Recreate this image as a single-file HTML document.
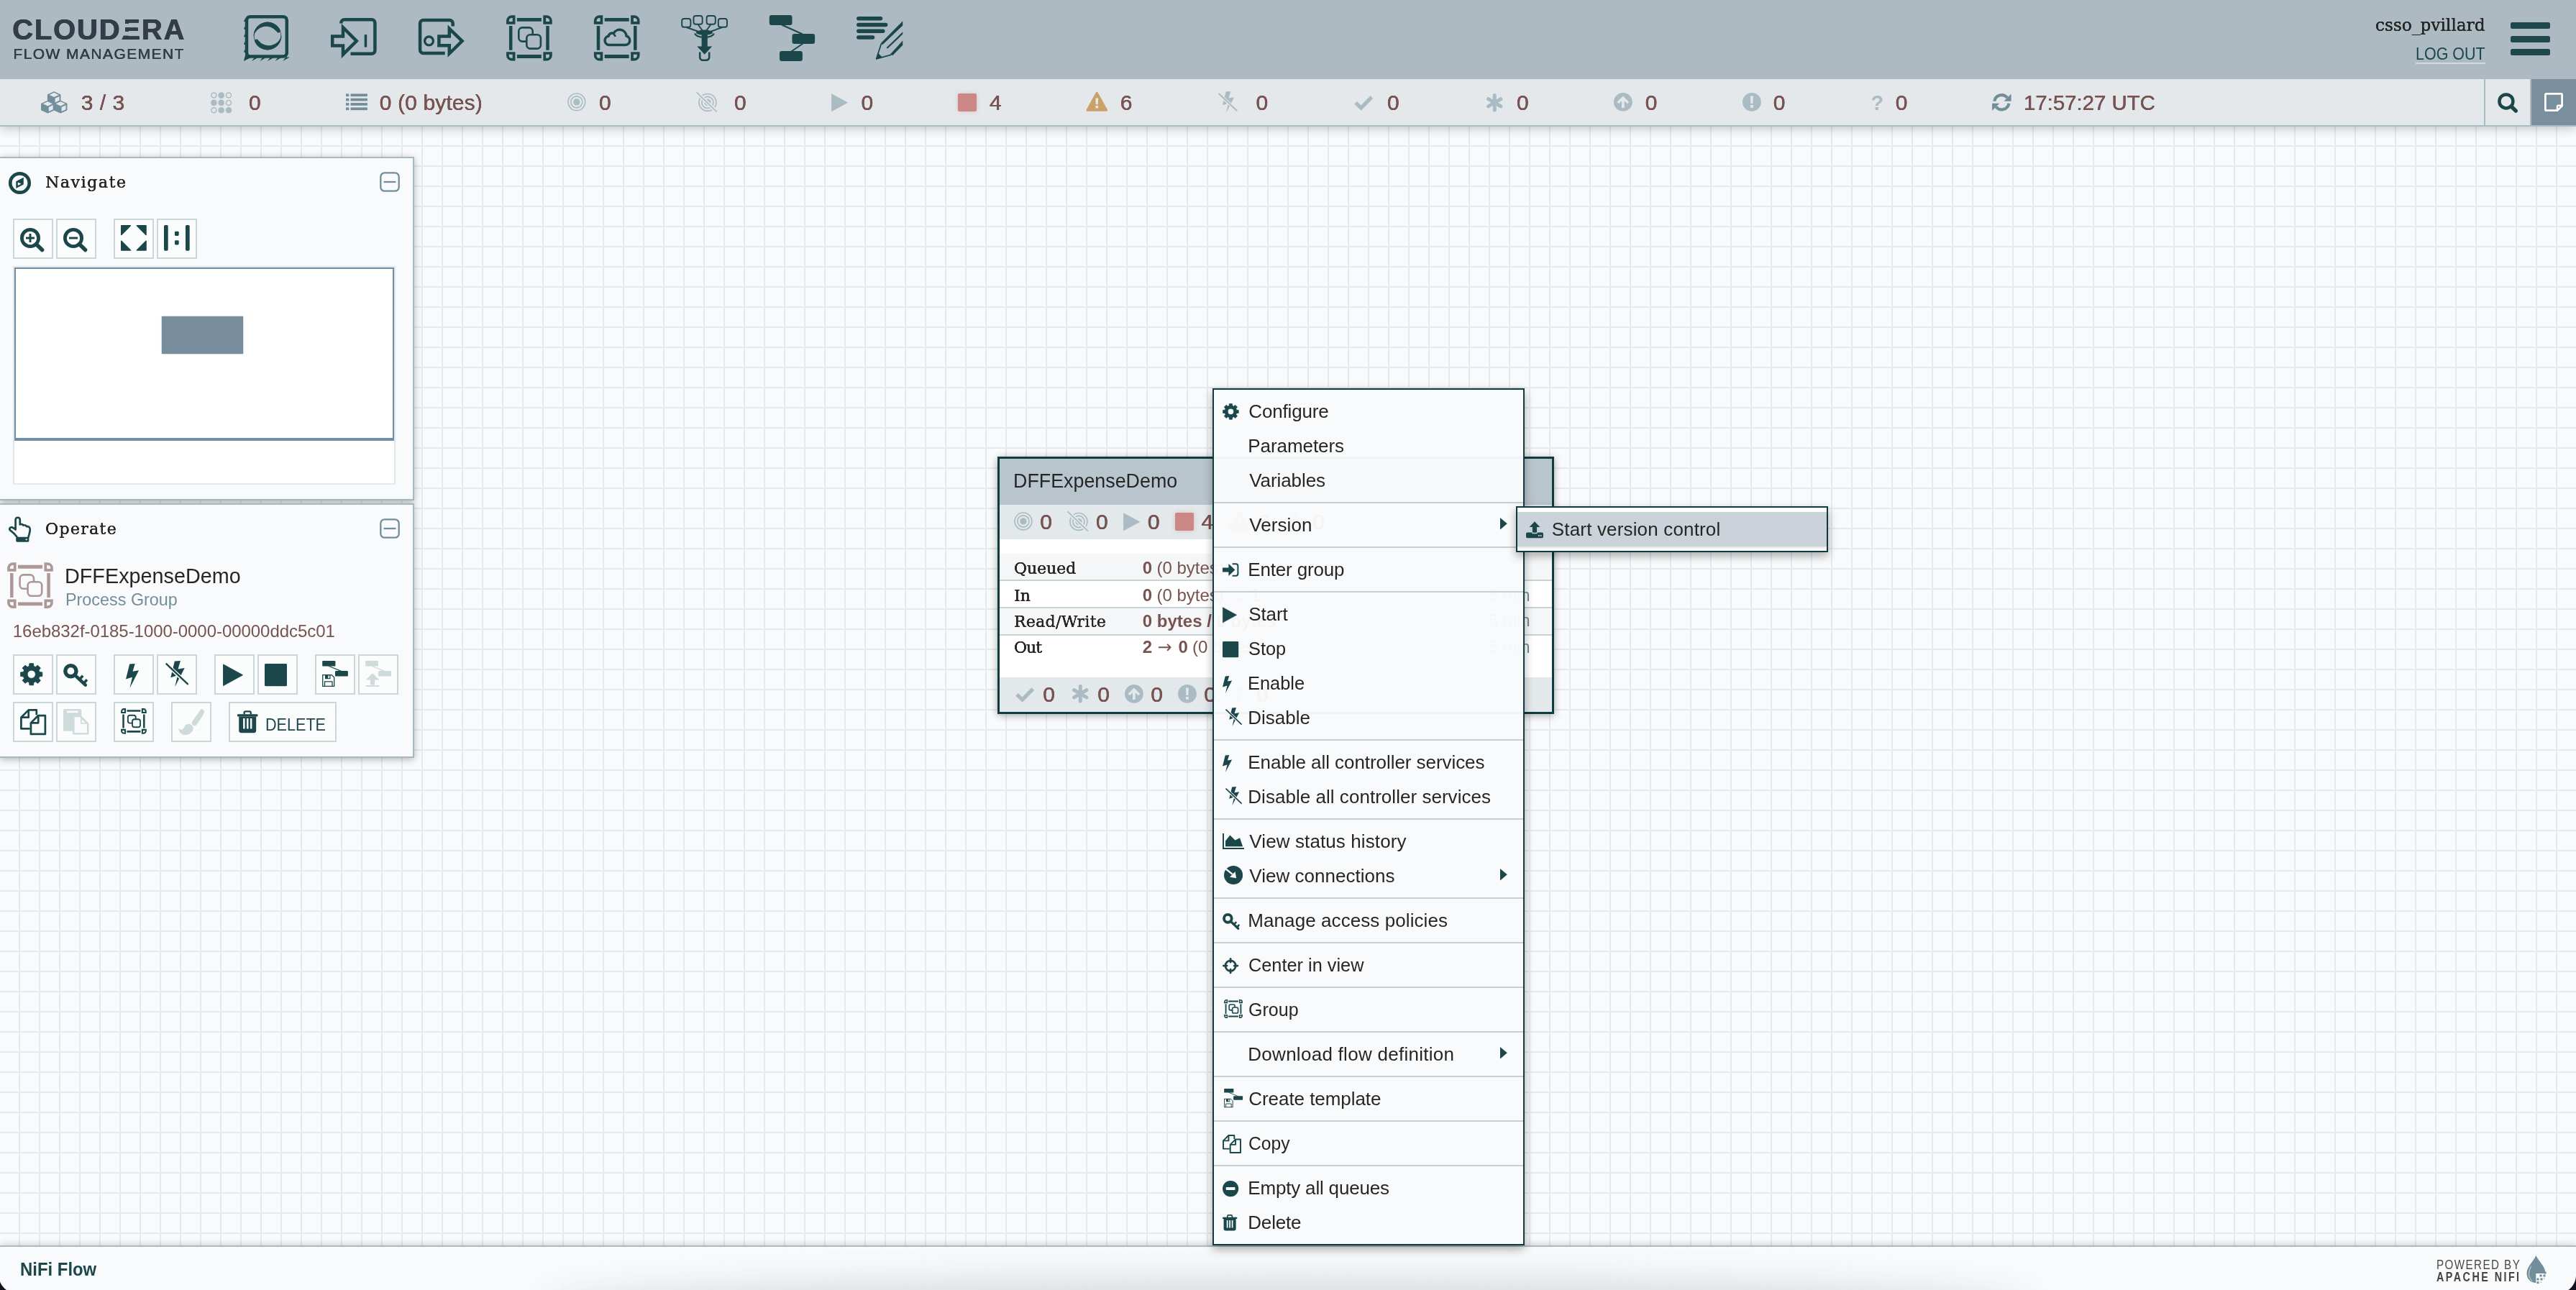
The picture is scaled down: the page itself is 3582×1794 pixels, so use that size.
<!DOCTYPE html>
<html lang="en"><head><meta charset="utf-8"><title>NiFi Flow</title>
<style>
html,body{margin:0;padding:0}
body{width:3582px;height:1794px;overflow:hidden;background:#f9fafb;font-family:"Liberation Sans",sans-serif}
.page,.page div,.page header{position:absolute}
.t{position:absolute;white-space:pre;display:block}
.page{will-change:transform}
.ic{position:absolute;display:block;overflow:visible}
.grid{background-color:#f9fafb;background-image:linear-gradient(90deg,transparent 26px,#e5eaec 26px),linear-gradient(180deg,transparent 6px,#e5eaec 6px,#e5eaec 8px,transparent 8px);background-size:28px 28px,28px 28px}
.pg{background:#fff;border:3px solid #0f3c40;box-sizing:border-box;box-shadow:0 2px 10px rgba(0,0,0,.33)}
.menu{background:rgba(249,250,251,.97);border:2px solid #0f3c40;box-sizing:border-box;box-shadow:0 5px 12px rgba(0,0,0,.33)}
</style></head>
<body>
<div id="nifi" class="page" style="left:0px;top:0px;width:3582px;height:1794px;"><div id="canvas" class="grid" style="left:0px;top:0px;width:3582px;height:1794px;"><div id="process-group" class="pg" style="left:1387px;top:635px;width:774px;height:358px;"><div style="left:0px;top:0px;width:768px;height:64px;background:#b9c5cc"></div>
<span class="t" style="left:19.28px;top:13.20px;font-size:28px;line-height:35px;color:#262626;transform:scaleX(0.9583);transform-origin:0 0;">DFFExpenseDemo</span><div style="left:0px;top:64px;width:768px;height:48px;background:#e3e8eb"></div>
<svg class="ic" style="left:20px;top:74.2px;width:25.8px;height:25.8px" viewBox="0 0 26 26" preserveAspectRatio="none"><circle cx="13" cy="13" r="4.7" fill="#aabbc3"/><circle cx="13" cy="13" r="8.1" fill="none" stroke="#aabbc3" stroke-width="1.7"/><circle cx="13" cy="13" r="12" fill="none" stroke="#aabbc3" stroke-width="1.7"/></svg><span class="t" style="left:56.30px;top:69.00px;font-size:30px;line-height:38px;color:#775351;text-shadow:0.275px 0 0 #775351,-0.275px 0 0 #775351;">0</span><svg class="ic" style="left:94.4px;top:72.6px;width:29.4px;height:28.4px" viewBox="0 0 29.5 28.5" preserveAspectRatio="none"><circle cx="16" cy="14.5" r="4.7" fill="#aabbc3"/><circle cx="16" cy="14.5" r="8.1" fill="none" stroke="#aabbc3" stroke-width="1.7"/><circle cx="16" cy="14.5" r="12" fill="none" stroke="#aabbc3" stroke-width="1.7"/><path d="M2 1.5L28 27" stroke="#e3e8eb" stroke-width="5.2" fill="none"/><path d="M0.6 0.4L28.9 27.8" stroke="#aabbc3" stroke-width="1.7" fill="none"/></svg><span class="t" style="left:134.00px;top:69.00px;font-size:30px;line-height:38px;color:#775351;text-shadow:0.275px 0 0 #775351,-0.275px 0 0 #775351;">0</span><svg class="ic" style="left:171.9px;top:74.5px;width:23.4px;height:25.5px;" viewBox="0 0 100 100" preserveAspectRatio="none"><polygon fill="#aabbc3" stroke="#aabbc3" stroke-width="3" stroke-linejoin="round" points="2,3 97,50 2,97"/></svg><span class="t" style="left:205.90px;top:69.00px;font-size:30px;line-height:38px;color:#775351;text-shadow:0.275px 0 0 #775351,-0.275px 0 0 #775351;">0</span><div style="left:244px;top:74.5px;width:25.8px;height:25.5px;background:#cb8887;border-radius:2px;box-shadow:0 0 6px rgba(203,136,135,.4)"></div>
<span class="t" style="left:280.60px;top:69.00px;font-size:30px;line-height:38px;color:#775351;text-shadow:0.275px 0 0 #775351,-0.275px 0 0 #775351;">4</span><svg class="ic" style="left:318px;top:72px;width:30.5px;height:28px" viewBox="0 0 30.5 28" preserveAspectRatio="none"><path fill="#caa169" stroke="#caa169" stroke-width="3" stroke-linejoin="round" d="M15.25 2.2L28.6 26.3H1.9Z"/><path fill="#e3e8eb" d="M13.3 9.6h3.9l-.5 8.6h-2.9zM13.4 20h3.7v3.4h-3.7z"/></svg><span class="t" style="left:359.00px;top:69.00px;font-size:30px;line-height:38px;color:#775351;text-shadow:0.275px 0 0 #775351,-0.275px 0 0 #775351;">6</span><svg class="ic" style="left:397px;top:72px;width:26.7px;height:30px" viewBox="0 0 23 26" preserveAspectRatio="none"><polygon fill="#aabbc3" points="9.18,0.43 14.95,0 12.51,8.21 19.09,7.13 9.44,25.92 12.09,14.47 5.2,16.63"/><path d="M1.2 3.6L22 23" stroke="#e3e8eb" stroke-width="3.7" fill="none"/><path d="M0.5 2.6L22.6 23.6" stroke="#aabbc3" stroke-width="1.7" fill="none"/></svg><span class="t" style="left:435.00px;top:69.00px;font-size:30px;line-height:38px;color:#775351;text-shadow:0.275px 0 0 #775351,-0.275px 0 0 #775351;">0</span><div style="left:0px;top:132px;width:768px;height:36px;background:#f4f6f7"></div>
<div style="left:0px;top:168px;width:768px;height:2px;background:#c7d2d7"></div>
<span class="t" style="left:19.64px;top:137.80px;font-size:23px;line-height:29px;color:#262626;font-family:'DejaVu Serif Condensed', 'DejaVu Serif', 'Liberation Serif', serif;transform:scaleX(1.06);transform-origin:0 0;text-shadow:0.05px 0 0 #262626,-0.05px 0 0 #262626;">Queued</span><div style="left:0px;top:170px;width:768px;height:36px;background:#fff"></div>
<div style="left:0px;top:206px;width:768px;height:2px;background:#c7d2d7"></div>
<span class="t" style="left:19.64px;top:175.70px;font-size:23px;line-height:29px;color:#262626;letter-spacing:0.107px;font-family:'DejaVu Serif Condensed', 'DejaVu Serif', 'Liberation Serif', serif;transform:scaleX(1.06);transform-origin:0 0;text-shadow:0.05px 0 0 #262626,-0.05px 0 0 #262626;">In</span><div style="left:0px;top:208px;width:768px;height:36px;background:#f4f6f7"></div>
<div style="left:0px;top:244px;width:768px;height:2px;background:#c7d2d7"></div>
<span class="t" style="left:19.64px;top:211.90px;font-size:23px;line-height:29px;color:#262626;letter-spacing:0.324px;font-family:'DejaVu Serif Condensed', 'DejaVu Serif', 'Liberation Serif', serif;transform:scaleX(1.06);transform-origin:0 0;text-shadow:0.05px 0 0 #262626,-0.05px 0 0 #262626;">Read/Write</span><div style="left:0px;top:246px;width:768px;height:36px;background:#fff"></div>
<span class="t" style="left:19.64px;top:247.80px;font-size:23px;line-height:29px;color:#262626;letter-spacing:-0.895px;font-family:'DejaVu Serif Condensed', 'DejaVu Serif', 'Liberation Serif', serif;transform:scaleX(1.06);transform-origin:0 0;text-shadow:0.05px 0 0 #262626,-0.05px 0 0 #262626;">Out</span><span class="t" style="left:198.80px;top:136.80px;font-size:24px;line-height:30px;color:#775351;font-weight:700;">0</span><span class="t" style="left:218.40px;top:136.80px;font-size:24px;line-height:30px;color:#775351;">(0 bytes)</span><span class="t" style="left:198.80px;top:174.70px;font-size:24px;line-height:30px;color:#775351;font-weight:700;">0</span><span class="t" style="left:218.40px;top:174.70px;font-size:24px;line-height:30px;color:#775351;">(0 bytes) → 1</span><span class="t" style="left:198.80px;top:210.90px;font-size:24px;line-height:30px;color:#775351;font-weight:700;">0 bytes / 0 bytes</span><span class="t" style="left:198.80px;top:246.80px;font-size:24px;line-height:30px;color:#775351;font-weight:700;">2</span><span class="t" style="left:219.50px;top:246.80px;font-size:24px;line-height:30px;color:#775351;font-family:'DejaVu Sans', 'Liberation Sans', sans-serif;">→</span><span class="t" style="left:248.60px;top:246.80px;font-size:24px;line-height:30px;color:#775351;font-weight:700;">0</span><span class="t" style="left:268.00px;top:246.80px;font-size:24px;line-height:30px;color:#775351;">(0 bytes)</span><span class="t" style="left:680.00px;top:174.50px;font-size:24px;line-height:30px;color:#728e9b;transform:scaleX(0.9819);transform-origin:0 0;">5 min</span><span class="t" style="left:680.00px;top:210.20px;font-size:24px;line-height:30px;color:#728e9b;transform:scaleX(0.9819);transform-origin:0 0;">5 min</span><span class="t" style="left:680.00px;top:246.50px;font-size:24px;line-height:30px;color:#728e9b;transform:scaleX(0.9819);transform-origin:0 0;">5 min</span><div style="left:0px;top:304px;width:768px;height:48px;background:#e3e8eb"></div>
<svg class="ic" style="left:21.9px;top:317px;width:26.2px;height:21.5px" viewBox="0 0 26.25 21.5" preserveAspectRatio="none"><path fill="none" stroke="#aabbc3" stroke-width="5.2" d="M2 10.8L9.6 18.2L24.4 3.2"/></svg><span class="t" style="left:60.30px;top:309.00px;font-size:30px;line-height:38px;color:#775351;text-shadow:0.275px 0 0 #775351,-0.275px 0 0 #775351;">0</span><svg class="ic" style="left:99.7px;top:314.2px;width:24.5px;height:25.5px" viewBox="0 0 24.5 25.5" preserveAspectRatio="none"><g stroke="#aabbc3" stroke-width="5" stroke-linecap="round"><path d="M12.25 2.55L12.25 22.95"/><path d="M3.59 7.65L20.91 17.85"/><path d="M20.91 7.65L3.59 17.85"/></g></svg><span class="t" style="left:136.30px;top:309.00px;font-size:30px;line-height:38px;color:#775351;text-shadow:0.275px 0 0 #775351,-0.275px 0 0 #775351;">0</span><svg class="ic" style="left:173.8px;top:314.2px;width:25.8px;height:25.8px" viewBox="0 0 26 26" preserveAspectRatio="none"><circle cx="13" cy="13" r="13" fill="#aabbc3"/><path fill="#e3e8eb" d="M13 4.6L21.4 13L19 15.4L14.9 11.3V21.2H11.1V11.3L7 15.4L4.6 13Z"/></svg><span class="t" style="left:210.30px;top:309.00px;font-size:30px;line-height:38px;color:#775351;text-shadow:0.275px 0 0 #775351,-0.275px 0 0 #775351;">0</span><svg class="ic" style="left:248px;top:314.2px;width:25.8px;height:25.8px" viewBox="0 0 26 26" preserveAspectRatio="none"><circle cx="13" cy="13" r="13" fill="#aabbc3"/><path fill="#e3e8eb" d="M11 4.6h4l-.5 10.4h-3zM11.1 17.2h3.8v3.8h-3.8z"/></svg><span class="t" style="left:284.20px;top:309.00px;font-size:30px;line-height:38px;color:#775351;text-shadow:0.275px 0 0 #775351,-0.275px 0 0 #775351;">0</span><span class="t" style="left:323.00px;top:310.00px;font-size:29px;line-height:36px;color:#aabbc3;font-weight:700;">?</span><span class="t" style="left:357.00px;top:309.00px;font-size:30px;line-height:38px;color:#775351;text-shadow:0.275px 0 0 #775351,-0.275px 0 0 #775351;">0</span></div>
</div>
<header id="header" style="left:0px;top:0px;width:3582px;height:110px;background:#adbac2;z-index:3"><div class="logo" style="left:0px;top:0px;width:300px;height:110px;"><span class="t" style="left:17.20px;top:15.70px;font-size:40px;line-height:50px;color:#333d47;letter-spacing:1.804px;font-weight:700;text-shadow:0.45px 0 0 #333d47,-0.45px 0 0 #333d47;">CLOUDERA</span><div style="left:170.03px;top:24px;width:7.6px;height:33px;background:#adbac2"></div><div style="left:174.40px;top:26.90px;width:4.13px;height:5.90px;background:#333d47"></div><div style="left:174.40px;top:38.10px;width:4.13px;height:5.50px;background:#333d47"></div><div style="left:169.20px;top:49.40px;width:9.33px;height:5.70px;background:#333d47;clip-path:polygon(2.6px 0,100% 0,100% 100%,0 100%)"></div><span class="t" style="left:18.40px;top:62.00px;font-size:21px;line-height:26px;color:#333d47;letter-spacing:1.430px;text-shadow:0.2px 0 0 #333d47,-0.2px 0 0 #333d47;">FLOW MANAGEMENT</span></div>
<svg class="ic" style="left:0;top:0;width:1300px;height:110px" viewBox="0 0 1300 110"><g fill="none" stroke="#1b474b"><rect x="343" y="23.2" width="55.800" height="55.300" rx="5" stroke-width="4.500"/><circle cx="372" cy="50" r="18.800" stroke-width="0.800"/></g><path fill="#1b474b" d="M352.61 50.68A19.4 19.4 0 0 1 389.58 41.8A2.6 2.6 0 0 1 384.87 44A18.2 18.2 0 0 0 352.61 50.68Z"/><path fill="#1b474b" d="M391.39 49.32A19.4 19.4 0 0 1 354.42 58.2A2.6 2.6 0 0 1 359.13 56A18.2 18.2 0 0 0 391.39 49.32Z"/><path fill="#1b474b" d="M341.500 24.4L338.900 29.7L341.500 30.4ZM341.500 35L338.900 40.3L341.500 41ZM341.500 45.6L338.900 50.9L341.500 51.6ZM341.500 56.2L338.900 61.5L341.500 62.2ZM341.500 66.9L338.900 72.2L341.500 72.9ZM350 85L354.2 79.500L359.6 79.500ZM361.4 85L365.6 79.500L371 79.500ZM372 85L376.2 79.500L381.6 79.500ZM382.6 85L386.8 79.500L392.2 79.500ZM393.2 85L397.4 79.500L402.8 79.500ZM338.900 85L341.200 76L349 80Z"/><g fill="none" stroke="#1b474b" stroke-width="4.500" stroke-linejoin="miter"><path d="M474.300 32.500V31.800A4.500 4.500 0 0 1 478.800 27.300H516.900A4.500 4.500 0 0 1 521.400 31.800V70.300A4.500 4.500 0 0 1 516.900 74.800H487.500"/><path d="M462.200 50.600H477V38.200L495.800 57L477 75.800V63.400H462.200Z"/></g><rect x="506.700" y="48.100" width="3.500" height="17.500" fill="#1b474b"/><g fill="none" stroke="#1b474b" stroke-width="4.500"><path d="M629.700 36.500V32.600A4.500 4.500 0 0 0 625.200 28.100H588.600A4.500 4.500 0 0 0 584.100 32.600V69.500A4.500 4.500 0 0 0 588.600 74H618.700"/><path d="M610.400 50.500H624.800V39.800L642.600 57.100L624.800 74.500V63.200H610.400Z"/><circle cx="596.500" cy="56.900" r="5.900" stroke-width="3.300"/></g><g fill="none" stroke="#1b474b" transform="translate(703.9 21.1)"><path stroke-width="4.800" d="M15 6.200H49M15 57.400H49"/><path stroke-width="4.500" d="M6.300 15V48.600M57.600 15V48.600"/><g stroke-width="3.700"><path d="M10.700 10.700H2V7.800A5.800 5.800 0 0 1 7.800 2H10.700Z"/><path d="M53.300 10.700H62V7.800A5.800 5.800 0 0 0 56.200 2H53.300Z"/><path d="M10.700 52.900H2V55.800A5.800 5.800 0 0 0 7.800 61.600H10.700Z"/><path d="M53.300 52.900H62V55.800A5.800 5.800 0 0 1 56.200 61.600H53.300Z"/></g></g><g fill="none" stroke="#1b474b" stroke-width="2.600"><rect x="721.300" y="38.400" width="19.400" height="19.200" rx="5"/><rect x="732.300" y="48.200" width="19.600" height="19.400" rx="5" fill="#adbac2"/></g><g fill="none" stroke="#1b474b" transform="translate(825.7 21.1)"><path stroke-width="4.800" d="M15 6.200H49M15 57.400H49"/><path stroke-width="4.500" d="M6.300 15V48.600M57.600 15V48.600"/><g stroke-width="3.700"><path d="M10.700 10.700H2V7.800A5.800 5.800 0 0 1 7.800 2H10.700Z"/><path d="M53.300 10.700H62V7.800A5.800 5.800 0 0 0 56.200 2H53.300Z"/><path d="M10.700 52.900H2V55.800A5.800 5.800 0 0 0 7.800 61.600H10.700Z"/><path d="M53.300 52.900H62V55.800A5.800 5.800 0 0 1 56.200 61.600H53.300Z"/></g></g><path fill="none" stroke="#1b474b" stroke-width="3.600" stroke-linejoin="round" d="M846.500 62.500H869.500A6.300 6.300 0 0 0 871 50.100A9.400 9.400 0 0 0 853.300 46.400A5.400 5.400 0 0 0 846 50.300A6.200 6.200 0 0 0 846.500 62.500Z"/><path fill="none" stroke="#1b474b" stroke-width="2.600" d="M853 47.500C854.500 48.200 855.300 49.400 855.600 51"/><g fill="none" stroke="#1b474b" stroke-width="1.900"><rect x="948.2" y="26" width="12.200" height="11.800" rx="3"/><rect x="964.5" y="22" width="12.200" height="11.800" rx="3"/><rect x="982.6" y="22" width="12.200" height="11.800" rx="3"/><rect x="998.8" y="26" width="12.200" height="11.800" rx="3"/><path d="M954.500 38L973 44.500M970.500 34L977.500 43.500M988.500 34L981.500 43.500M1004.500 38L986 44.500"/><path stroke-width="2.200" d="M966.200 46.500C968 53.500 991 53.500 992.800 46.500"/><path stroke-width="2.600" d="M973.200 72.500V79.500A4.200 4.200 0 0 0 977.400 83.700H982A4.200 4.200 0 0 0 986.200 79.500V72.500"/></g><ellipse cx="979.500" cy="45.200" rx="11.600" ry="3.600" fill="#1b474b"/><path fill="#1b474b" d="M975.600 48H983.800V64.400H990.300L979.700 75.800L969.300 64.400H975.600Z"/><g fill="#1b474b"><rect x="1069.800" y="21" width="31.700" height="14" rx="3"/><rect x="1101.500" y="46.900" width="31.600" height="14.100" rx="3"/><rect x="1084" y="71" width="31.900" height="14" rx="3"/></g><path stroke="#1b474b" stroke-width="2.100" d="M1087 34.500L1116 47.500M1116.500 60.500L1100.500 71.500"/><g stroke="#1b474b" stroke-width="5.500" stroke-linecap="round"><path d="M1193.800 25.700H1224.500M1193.800 34.600H1231.600M1193.800 43.300H1227.800M1193.800 51.900H1213.500"/></g><path fill="#1b474b" d="M1255.250 29.300V35.500L1227.200 62.300L1224.700 60.300Z"/><path fill="#1b474b" d="M1255.250 44.300V47.600L1234 67.800L1232.600 66.300Z"/><path fill="#1b474b" d="M1255.250 56.600V62.800L1241.300 77.100L1237.800 75.500Z"/><path fill="none" stroke="#1b474b" stroke-width="1.800" stroke-linejoin="round" d="M1225.300 61L1218.600 81.900L1239.400 76.200"/><path fill="#1b474b" d="M1218.200 82.600L1220.800 73.600L1227.200 79.900Z"/></svg><span class="t" style="left:3302.77px;top:18.60px;font-size:25px;line-height:31px;color:#262626;letter-spacing:0.043px;font-family:'DejaVu Serif Condensed', 'DejaVu Serif', 'Liberation Serif', serif;transform:scaleX(1.03);transform-origin:0 0;text-shadow:0.1px 0 0 #262626,-0.1px 0 0 #262626;">csso_pvillard</span><span class="t" style="left:3358.60px;top:60.20px;font-size:24px;line-height:30px;color:#1b474b;transform:scaleX(0.8952);transform-origin:0 0;">LOG OUT</span><div style="left:3359px;top:87px;width:97px;height:2px;background:#d3dcdf"></div>
<div style="left:3491.2px;top:31.2px;width:55px;height:9px;background:#1d484c;border-radius:2.5px"></div>
<div style="left:3491.2px;top:49.7px;width:55px;height:9px;background:#1d484c;border-radius:2.5px"></div>
<div style="left:3491.2px;top:68px;width:55px;height:9px;background:#1d484c;border-radius:2.5px"></div>
</header>
<div id="flow-status" style="left:0px;top:110px;width:3582px;height:66px;background:#e5e8eb;border-bottom:2px solid #aabbc3;box-sizing:border-box;box-shadow:0 3px 14px rgba(0,0,0,.22);z-index:2"><svg class="ic" style="left:56.8px;top:16.7px;width:36.75px;height:30.6px" viewBox="0 0 36.75 30.6" preserveAspectRatio="none"><polygon fill="#728e9b" stroke="#728e9b" stroke-width="1.200" stroke-linejoin="round" points="18.2,0.8 26.9,4.9 26.9,13.5 18.2,17.6 9.5,13.5 9.5,4.9"/><polygon fill="#e5e8eb" points="18.2,1.78 24.81,4.9 18.2,8.02 11.59,4.9"/><polygon fill="#e5e8eb" points="25.51,6.93 19.59,9.72 19.59,15.57 25.51,12.78"/><polygon fill="#728e9b" stroke="#728e9b" stroke-width="1.200" stroke-linejoin="round" points="9.4,13.2 18.1,17.3 18.1,25.9 9.4,30 0.7,25.9 0.7,17.3"/><polygon fill="#e5e8eb" points="9.4,14.18 16.01,17.3 9.4,20.42 2.79,17.3"/><polygon fill="#e5e8eb" points="16.71,19.33 10.79,22.12 10.79,27.97 16.71,25.18"/><polygon fill="#728e9b" stroke="#728e9b" stroke-width="1.200" stroke-linejoin="round" points="27.2,13.2 35.9,17.3 35.9,25.9 27.2,30 18.5,25.9 18.5,17.3"/><polygon fill="#e5e8eb" points="27.2,14.18 33.81,17.3 27.2,20.42 20.59,17.3"/><polygon fill="#e5e8eb" points="34.51,19.33 28.59,22.12 28.59,27.97 34.51,25.18"/></svg><span class="t" style="left:112.80px;top:14.20px;font-size:30px;line-height:38px;color:#775351;letter-spacing:0.503px;text-shadow:0.175px 0 0 #775351,-0.175px 0 0 #775351;">3 / 3</span><svg class="ic" style="left:292.5px;top:17.5px;width:29.5px;height:29.5px" viewBox="0 0 29.5 29.5" preserveAspectRatio="none"><circle cx="4.4" cy="4.6" r="3.500" fill="none" stroke="#aabbc3" stroke-width="1.500"/><circle cx="14.7" cy="4.6" r="4.300" fill="#aabbc3"/><circle cx="25" cy="4.6" r="3.500" fill="none" stroke="#aabbc3" stroke-width="1.500"/><circle cx="4.4" cy="14.9" r="4.300" fill="#aabbc3"/><circle cx="14.7" cy="14.9" r="4.300" fill="#aabbc3"/><circle cx="25" cy="14.9" r="3.500" fill="none" stroke="#aabbc3" stroke-width="1.500"/><circle cx="4.4" cy="25.2" r="3.500" fill="none" stroke="#aabbc3" stroke-width="1.500"/><circle cx="14.7" cy="25.2" r="4.300" fill="#aabbc3"/><circle cx="25" cy="25.2" r="4.300" fill="#aabbc3"/></svg><span class="t" style="left:346.00px;top:14.20px;font-size:30px;line-height:38px;color:#775351;text-shadow:0.175px 0 0 #775351,-0.175px 0 0 #775351;">0</span><svg class="ic" style="left:480.5px;top:19.5px;width:30px;height:23.5px" viewBox="0 0 30 23.5" preserveAspectRatio="none"><rect x="0" y="0.4" width="4.300" height="3.700" fill="#728e9b"/><rect x="6.500" y="0.4" width="23.400" height="3.700" fill="#728e9b"/><rect x="0" y="6.75" width="4.300" height="3.700" fill="#728e9b"/><rect x="6.500" y="6.75" width="23.400" height="3.700" fill="#728e9b"/><rect x="0" y="13.1" width="4.300" height="3.700" fill="#728e9b"/><rect x="6.500" y="13.1" width="23.400" height="3.700" fill="#728e9b"/><rect x="0" y="19.45" width="4.300" height="3.700" fill="#728e9b"/><rect x="6.500" y="19.45" width="23.400" height="3.700" fill="#728e9b"/></svg><span class="t" style="left:527.80px;top:14.20px;font-size:30px;line-height:38px;color:#775351;letter-spacing:0.127px;text-shadow:0.175px 0 0 #775351,-0.175px 0 0 #775351;">0 (0 bytes)</span><svg class="ic" style="left:789px;top:19.3px;width:25.7px;height:25.7px" viewBox="0 0 26 26" preserveAspectRatio="none"><circle cx="13" cy="13" r="4.7" fill="#aabbc3"/><circle cx="13" cy="13" r="8.1" fill="none" stroke="#aabbc3" stroke-width="1.7"/><circle cx="13" cy="13" r="12" fill="none" stroke="#aabbc3" stroke-width="1.7"/></svg><span class="t" style="left:833.00px;top:14.20px;font-size:30px;line-height:38px;color:#775351;text-shadow:0.175px 0 0 #775351,-0.175px 0 0 #775351;">0</span><svg class="ic" style="left:967.7px;top:17.6px;width:29.4px;height:28.4px" viewBox="0 0 29.5 28.5" preserveAspectRatio="none"><circle cx="16" cy="14.5" r="4.7" fill="#aabbc3"/><circle cx="16" cy="14.5" r="8.1" fill="none" stroke="#aabbc3" stroke-width="1.7"/><circle cx="16" cy="14.5" r="12" fill="none" stroke="#aabbc3" stroke-width="1.7"/><path d="M2 1.5L28 27" stroke="#e5e8eb" stroke-width="5.2" fill="none"/><path d="M0.6 0.4L28.9 27.8" stroke="#aabbc3" stroke-width="1.7" fill="none"/></svg><span class="t" style="left:1021.00px;top:14.20px;font-size:30px;line-height:38px;color:#775351;text-shadow:0.175px 0 0 #775351,-0.175px 0 0 #775351;">0</span><svg class="ic" style="left:1156px;top:19.5px;width:23.2px;height:25.5px;" viewBox="0 0 100 100" preserveAspectRatio="none"><polygon fill="#aabbc3" stroke="#aabbc3" stroke-width="3" stroke-linejoin="round" points="2,3 97,50 2,97"/></svg><span class="t" style="left:1197.50px;top:14.20px;font-size:30px;line-height:38px;color:#775351;text-shadow:0.175px 0 0 #775351,-0.175px 0 0 #775351;">0</span><div style="left:1331.8px;top:19.5px;width:26.2px;height:25.5px;background:#cb8887;border-radius:2px;box-shadow:0 0 6px rgba(203,136,135,.4)"></div>
<span class="t" style="left:1376.00px;top:14.20px;font-size:30px;line-height:38px;color:#775351;text-shadow:0.175px 0 0 #775351,-0.175px 0 0 #775351;">4</span><svg class="ic" style="left:1510px;top:17px;width:30.5px;height:28px" viewBox="0 0 30.5 28" preserveAspectRatio="none"><path fill="#caa169" stroke="#caa169" stroke-width="3" stroke-linejoin="round" d="M15.25 2.2L28.6 26.3H1.9Z"/><path fill="#e5e8eb" d="M13.3 9.6h3.9l-.5 8.6h-2.9zM13.4 20h3.7v3.4h-3.7z"/></svg><span class="t" style="left:1557.80px;top:14.20px;font-size:30px;line-height:38px;color:#775351;text-shadow:0.175px 0 0 #775351,-0.175px 0 0 #775351;">6</span><svg class="ic" style="left:1694.2px;top:17px;width:26.7px;height:30px" viewBox="0 0 23 26" preserveAspectRatio="none"><polygon fill="#aabbc3" points="9.18,0.43 14.95,0 12.51,8.21 19.09,7.13 9.44,25.92 12.09,14.47 5.2,16.63"/><path d="M1.2 3.6L22 23" stroke="#e5e8eb" stroke-width="3.7" fill="none"/><path d="M0.5 2.6L22.6 23.6" stroke="#aabbc3" stroke-width="1.7" fill="none"/></svg><span class="t" style="left:1746.50px;top:14.20px;font-size:30px;line-height:38px;color:#775351;text-shadow:0.175px 0 0 #775351,-0.175px 0 0 #775351;">0</span><svg class="ic" style="left:1883.3px;top:22px;width:26.2px;height:21.5px" viewBox="0 0 26.25 21.5" preserveAspectRatio="none"><path fill="none" stroke="#aabbc3" stroke-width="5.2" d="M2 10.8L9.6 18.2L24.4 3.2"/></svg><span class="t" style="left:1929.00px;top:14.20px;font-size:30px;line-height:38px;color:#775351;text-shadow:0.175px 0 0 #775351,-0.175px 0 0 #775351;">0</span><svg class="ic" style="left:2065.5px;top:19.5px;width:24.5px;height:25.5px" viewBox="0 0 24.5 25.5" preserveAspectRatio="none"><g stroke="#aabbc3" stroke-width="5" stroke-linecap="round"><path d="M12.25 2.55L12.25 22.95"/><path d="M3.59 7.65L20.91 17.85"/><path d="M20.91 7.65L3.59 17.85"/></g></svg><span class="t" style="left:2109.00px;top:14.20px;font-size:30px;line-height:38px;color:#775351;text-shadow:0.175px 0 0 #775351,-0.175px 0 0 #775351;">0</span><svg class="ic" style="left:2244.2px;top:19.3px;width:25.8px;height:25.8px" viewBox="0 0 26 26" preserveAspectRatio="none"><circle cx="13" cy="13" r="13" fill="#aabbc3"/><path fill="#e5e8eb" d="M13 4.6L21.4 13L19 15.4L14.9 11.3V21.2H11.1V11.3L7 15.4L4.6 13Z"/></svg><span class="t" style="left:2287.80px;top:14.20px;font-size:30px;line-height:38px;color:#775351;text-shadow:0.175px 0 0 #775351,-0.175px 0 0 #775351;">0</span><svg class="ic" style="left:2422.5px;top:19.3px;width:25.8px;height:25.8px" viewBox="0 0 26 26" preserveAspectRatio="none"><circle cx="13" cy="13" r="13" fill="#aabbc3"/><path fill="#e5e8eb" d="M11 4.6h4l-.5 10.4h-3zM11.1 17.2h3.8v3.8h-3.8z"/></svg><span class="t" style="left:2465.80px;top:14.20px;font-size:30px;line-height:38px;color:#775351;text-shadow:0.175px 0 0 #775351,-0.175px 0 0 #775351;">0</span><span class="t" style="left:2601.50px;top:15.20px;font-size:29px;line-height:36px;color:#aabbc3;font-weight:700;">?</span><span class="t" style="left:2635.80px;top:14.20px;font-size:30px;line-height:38px;color:#775351;text-shadow:0.175px 0 0 #775351,-0.175px 0 0 #775351;">0</span><svg class="ic" style="left:2770px;top:20px;width:26.75px;height:24.5px" viewBox="0 0 26.75 24.5" preserveAspectRatio="none"><g fill="none" stroke="#728e9b" stroke-width="4.200"><path d="M3.300 10.800A10.100 10.100 0 0 1 21.200 6"/><path d="M23.400 13.700A10.100 10.100 0 0 1 5.500 18.500"/></g><path fill="#728e9b" d="M26.600 0.600V10.800H16.400Z"/><path fill="#728e9b" d="M0.100 23.900V13.700H10.300Z"/></svg><span class="t" style="left:2813.54px;top:14.20px;font-size:30px;line-height:38px;color:#775351;transform:scaleX(0.9793);transform-origin:0 0;text-shadow:0.175px 0 0 #775351,-0.175px 0 0 #775351;">17:57:27 UTC</span><div style="left:3454px;top:0px;width:2px;height:64px;background:#aabbc3"></div>
<svg class="ic" style="left:3472.8px;top:19.2px;width:30px;height:30px" viewBox="0 0 30 30" preserveAspectRatio="none"><circle cx="11.900" cy="11.900" r="9.500" fill="none" stroke="#1b474b" stroke-width="4.500"/><path d="M19.200 19.200L25.300 25.100" stroke="#1b474b" stroke-width="5.400" stroke-linecap="round"/></svg><div style="left:3518px;top:0px;width:64px;height:64px;background:#7a8f9e;border-left:2px solid #aebbc4;box-sizing:border-box"></div>
<svg class="ic" style="left:3538px;top:19.2px;width:26px;height:26px" viewBox="0 0 26 26" preserveAspectRatio="none"><path fill="none" stroke="#fff" stroke-width="2.700" stroke-linejoin="round" d="M2.700 1.400H23.300A1.300 1.300 0 0 1 24.600 2.700V18.300L18 24.700H2.700A1.300 1.300 0 0 1 1.400 23.400V2.700A1.300 1.300 0 0 1 2.700 1.400Z"/><path fill="none" stroke="#fff" stroke-width="2.400" stroke-linejoin="round" d="M24.400 17.800H19.100A1.200 1.200 0 0 0 17.900 19V24.500"/></svg></div>
<div id="navigation-control" class="graph-control" style="left:0px;top:218px;width:576px;height:478px;background:rgba(249,250,251,.94);border:2px solid #a7b8c1;border-left:0;box-sizing:border-box;box-shadow:0 2px 10px rgba(0,0,0,.28)"><svg class="ic" style="left:11.9px;top:18.6px;width:31px;height:31px" viewBox="0 0 31 31" preserveAspectRatio="none"><circle cx="15.500" cy="15.500" r="13.200" fill="none" stroke="#1b474b" stroke-width="4.700"/><polygon fill="#1b474b" points="10.300,13.200 20.800,7.800 20.800,17.500 10.300,22.900"/><polygon fill="#f9fafb" points="12.800,14.400 17.500,16.700 12.800,19"/></svg><span class="t" style="left:62.63px;top:19.10px;font-size:23px;line-height:29px;color:#262626;letter-spacing:1.405px;font-family:'DejaVu Serif Condensed', 'DejaVu Serif', 'Liberation Serif', serif;transform:scaleX(1.07);transform-origin:0 0;text-shadow:0.11px 0 0 #262626,-0.11px 0 0 #262626;">Navigate</span><svg class="ic" style="left:528.2px;top:18.8px;width:28px;height:28px" viewBox="0 0 28 28" preserveAspectRatio="none"><rect x="1.300" y="1.300" width="25.400" height="25.400" rx="5.500" fill="none" stroke="#728e9b" stroke-width="2.300"/><path d="M5.600 14H22.400" stroke="#728e9b" stroke-width="2.300"/></svg><div style="left:18px;top:84px;width:56px;height:56px;border:2px solid #cad6d8;box-sizing:border-box;background:rgba(255,255,255,.35)"></div>
<div style="left:78px;top:84px;width:56px;height:56px;border:2px solid #cad6d8;box-sizing:border-box;background:rgba(255,255,255,.35)"></div>
<div style="left:158px;top:84px;width:56px;height:56px;border:2px solid #cad6d8;box-sizing:border-box;background:rgba(255,255,255,.35)"></div>
<div style="left:218px;top:84px;width:56px;height:56px;border:2px solid #cad6d8;box-sizing:border-box;background:rgba(255,255,255,.35)"></div>
<svg class="ic" style="left:28.2px;top:96.9px;width:34px;height:34px" viewBox="0 0 34 34" preserveAspectRatio="none"><circle cx="14" cy="14" r="11.600" fill="none" stroke="#1b474b" stroke-width="4.800"/><path d="M23.300 23.600L30.600 30.500" stroke="#1b474b" stroke-width="5.500" stroke-linecap="round"/><path d="M8 14H20" stroke="#1b474b" stroke-width="2.900"/><path d="M14 8V20" stroke="#1b474b" stroke-width="2.900"/></svg><svg class="ic" style="left:88.2px;top:96.9px;width:34px;height:34px" viewBox="0 0 34 34" preserveAspectRatio="none"><circle cx="14" cy="14" r="11.600" fill="none" stroke="#1b474b" stroke-width="4.800"/><path d="M23.300 23.600L30.600 30.500" stroke="#1b474b" stroke-width="5.500" stroke-linecap="round"/><path d="M8 14H20" stroke="#1b474b" stroke-width="2.900"/></svg><svg class="ic" style="left:168.1px;top:93.1px;width:35.8px;height:35.8px" viewBox="0 0 35.8 35.8" preserveAspectRatio="none"><g fill="#1b474b" stroke="#1b474b" stroke-width="1.600" stroke-linejoin="round"><polygon points="0.800,0.800 13.4,0.800 0.800,13.4"/><polygon points="22.4,0.800 35,0.800 35,13.4"/><polygon points="0.800,22.4 0.800,35 13.4,35"/><polygon points="35,22.4 35,35 22.4,35"/></g></svg><svg class="ic" style="left:228.1px;top:93.1px;width:35.7px;height:35.7px" viewBox="0 0 35.7 35.7" preserveAspectRatio="none"><rect x="0" y="0" width="5.700" height="35.700" rx="1.600" fill="#1b474b"/><rect x="30" y="0" width="5.700" height="35.700" rx="1.600" fill="#1b474b"/><rect x="15" y="8.800" width="5.700" height="6.200" rx="1.400" fill="#1b474b"/><rect x="15" y="21.300" width="5.700" height="6.200" rx="1.400" fill="#1b474b"/></svg><div id="birdseye" style="left:18px;top:150px;width:532px;height:304px;background:#fff;border:2px solid #e0e8ea;box-sizing:border-box"><div style="left:205px;top:68px;width:113px;height:52px;background:#788d9b;box-shadow:0 0 1.500px #788d9b"></div>
<div style="left:0px;top:0px;width:528px;height:241px;border:2px solid #6f8fa8;border-bottom-width:4px;box-sizing:border-box"></div>
</div>
</div>
<div id="operation-control" class="graph-control" style="left:0px;top:700px;width:576px;height:354px;background:rgba(249,250,251,.94);border:2px solid #a7b8c1;border-left:0;box-sizing:border-box;box-shadow:0 2px 10px rgba(0,0,0,.28)"><svg class="ic" style="left:11.9px;top:16px;width:31.2px;height:36px" viewBox="0 0 31.2 36" preserveAspectRatio="none"><path fill="none" stroke="#1b474b" stroke-width="2.700" stroke-linejoin="round" stroke-linecap="round" d="M11.400 28.600C9 25 6.500 22.600 2.400 19.600C0.200 17.800 1.800 14.600 4.600 15.400C6.600 16 8.200 17.200 9.600 18.600V5.200C9.600 0.600 15.800 0.600 15.800 5.200V11.400C17.400 10.600 19.600 11 20.400 12.600C22 11.800 24.400 12.400 25 14.200C27.400 13.600 29.800 15 29.800 18.200C29.800 22.400 28.600 24.800 27.600 28.600"/><rect x="10.200" y="28.800" width="18.200" height="7" rx="1.800" fill="#1b474b"/><circle cx="24.700" cy="32.300" r="1.100" fill="#f9fafb"/></svg><span class="t" style="left:62.63px;top:18.90px;font-size:23px;line-height:29px;color:#262626;letter-spacing:1.174px;font-family:'DejaVu Serif Condensed', 'DejaVu Serif', 'Liberation Serif', serif;transform:scaleX(1.07);transform-origin:0 0;text-shadow:0.11px 0 0 #262626,-0.11px 0 0 #262626;">Operate</span><svg class="ic" style="left:528.2px;top:19px;width:28px;height:28px" viewBox="0 0 28 28" preserveAspectRatio="none"><rect x="1.300" y="1.300" width="25.400" height="25.400" rx="5.500" fill="none" stroke="#728e9b" stroke-width="2.300"/><path d="M5.600 14H22.400" stroke="#728e9b" stroke-width="2.300"/></svg><svg class="ic" style="left:10px;top:80.3px;width:64px;height:64px" viewBox="0 0 64 63.5" preserveAspectRatio="none"><g fill="none" stroke="#ad9897"><path stroke-width="4.8" d="M15 6.2H49M15 57.4H49"/><path stroke-width="4.5" d="M6.3 15V48.6M57.6 15V48.6"/><g stroke-width="3.7"><path d="M10.7 10.7H2V7.8A5.8 5.800 0 0 1 7.800 2H10.7Z"/><path d="M53.3 10.7H62V7.8A5.8 5.800 0 0 0 56.200 2H53.3Z"/><path d="M10.7 52.9H2V55.800A5.8 5.800 0 0 0 7.800 61.600H10.7Z"/><path d="M53.3 52.9H62V55.800A5.8 5.800 0 0 1 56.200 61.600H53.3Z"/></g><rect x="17.6" y="17.2" width="19.4" height="19.2" rx="5" stroke-width="2.6"/><rect x="28.6" y="27" width="19.600" height="19.400" rx="5" stroke-width="2.6" fill="#f9fafb"/></g></svg><span class="t" style="left:89.78px;top:79.70px;font-size:30px;line-height:38px;color:#262626;transform:scaleX(0.9592);transform-origin:0 0;">DFFExpenseDemo</span><span class="t" style="left:90.73px;top:116.70px;font-size:24px;line-height:30px;color:#728e9b;transform:scaleX(0.9734);transform-origin:0 0;">Process Group</span><span class="t" style="left:17.80px;top:161.30px;font-size:24px;line-height:30px;color:#775351;letter-spacing:-0.048px;">16eb832f-0185-1000-0000-00000ddc5c01</span><div style="left:18px;top:208px;width:56px;height:56px;border:2px solid #cad6d8;box-sizing:border-box;background:rgba(255,255,255,.35)"></div>
<div style="left:78px;top:208px;width:56px;height:56px;border:2px solid #cad6d8;box-sizing:border-box;background:rgba(255,255,255,.35)"></div>
<div style="left:158px;top:208px;width:56px;height:56px;border:2px solid #cad6d8;box-sizing:border-box;background:rgba(255,255,255,.35)"></div>
<div style="left:218px;top:208px;width:56px;height:56px;border:2px solid #cad6d8;box-sizing:border-box;background:rgba(255,255,255,.35)"></div>
<div style="left:298px;top:208px;width:56px;height:56px;border:2px solid #cad6d8;box-sizing:border-box;background:rgba(255,255,255,.35)"></div>
<div style="left:358px;top:208px;width:56px;height:56px;border:2px solid #cad6d8;box-sizing:border-box;background:rgba(255,255,255,.35)"></div>
<div style="left:438px;top:208px;width:56px;height:56px;border:2px solid #cad6d8;box-sizing:border-box;background:rgba(255,255,255,.35)"></div>
<div style="left:498px;top:208px;width:56px;height:56px;border:2px solid #cad6d8;box-sizing:border-box;background:rgba(255,255,255,.35)"></div>
<div style="left:18px;top:274px;width:56px;height:56px;border:2px solid #cad6d8;box-sizing:border-box;background:rgba(255,255,255,.35)"></div>
<div style="left:78px;top:274px;width:56px;height:56px;border:2px solid #cad6d8;box-sizing:border-box;background:rgba(255,255,255,.35)"></div>
<div style="left:158px;top:274px;width:56px;height:56px;border:2px solid #cad6d8;box-sizing:border-box;background:rgba(255,255,255,.35)"></div>
<div style="left:238px;top:274px;width:56px;height:56px;border:2px solid #cad6d8;box-sizing:border-box;background:rgba(255,255,255,.35)"></div>
<div style="left:318px;top:274px;width:150px;height:56px;border:2px solid #cad6d8;box-sizing:border-box;background:rgba(255,255,255,.35)"></div>
<svg class="ic" style="left:28.1px;top:220.4px;width:31.5px;height:31.5px" viewBox="0 0 100 100" preserveAspectRatio="none"><path fill="#1b474b" fill-rule="evenodd" stroke="#1b474b" stroke-width="3" stroke-linejoin="round" d="M40.11 14.35 L41.16 2.31 L58.84 2.31 L59.89 14.35 L68.22 17.8 L77.47 10.03 L89.97 22.53 L82.2 31.78 L85.65 40.11 L97.69 41.16 L97.69 58.84 L85.65 59.89 L82.2 68.22 L89.97 77.47 L77.47 89.97 L68.22 82.2 L59.89 85.65 L58.84 97.69 L41.16 97.69 L40.11 85.65 L31.78 82.2 L22.53 89.97 L10.03 77.47 L17.8 68.22 L14.35 59.89 L2.31 58.84 L2.31 41.16 L14.35 40.11 L17.8 31.78 L10.03 22.53 L22.53 10.03 L31.78 17.8ZM32 50a18 18 0 1 0 36 0a18 18 0 1 0 -36 0Z"/></svg><svg class="ic" style="left:87.9px;top:220.7px;width:34px;height:32px" viewBox="0 0 34 32" preserveAspectRatio="none"><g fill="none" stroke="#1b474b"><circle cx="10.4" cy="10.2" r="7.6" stroke-width="5.4"/><path d="M15.5 15.3L30.8 29.6" stroke-width="4.6" stroke-linecap="round"/><path d="M22.6 21.8L27.2 16.8M28.4 27.2L33 22.2" stroke-width="3.5"/></g></svg><svg class="ic" style="left:175px;top:220.5px;width:18.1px;height:33.7px" viewBox="0 0 13.1 24" preserveAspectRatio="none"><polygon fill="#1b474b" points="3.75,0.4 9.2,0 6.9,7.6 13.1,6.6 4,24 6.5,13.4 0,15.4"/></svg><svg class="ic" style="left:230px;top:216.7px;width:32.2px;height:36.3px" viewBox="0 0 23 26" preserveAspectRatio="none"><polygon fill="#1b474b" points="9.18,0.43 14.95,0 12.51,8.21 19.09,7.13 9.44,25.92 12.09,14.47 5.2,16.63"/><path d="M1.2 3.6L22 23" stroke="#f9fafb" stroke-width="3.7" fill="none"/><path d="M0.5 2.6L22.6 23.6" stroke="#1b474b" stroke-width="1.7" fill="none"/></svg><svg class="ic" style="left:309.7px;top:220.5px;width:28.4px;height:31.5px;" viewBox="0 0 100 100" preserveAspectRatio="none"><polygon fill="#1b474b" stroke="#1b474b" stroke-width="3" stroke-linejoin="round" points="2,3 97,50 2,97"/></svg><svg class="ic" style="left:368.4px;top:220.5px;width:31px;height:31.2px" viewBox="0 0 31 31.2" preserveAspectRatio="none"><rect width="31" height="31.2" rx="1.5" fill="#1b474b"/></svg><svg class="ic" style="left:447.9px;top:217px;width:36px;height:36px" viewBox="0 0 36 36" preserveAspectRatio="none"><rect x="0.2" y="0" width="18.2" height="7.6" rx="1.2" fill="#1b474b"/><rect x="18" y="14.1" width="17.9" height="7.5" rx="1.2" fill="#1b474b"/><path d="M9 7.2L27 14.6" stroke="#1b474b" stroke-width="1.2"/><path fill="none" stroke="#1b474b" stroke-width="1.3" d="M0.7 19.600H13.2L16.700 23.100V35.400H0.7Z"/><path fill="#1b474b" d="M4 19.400H11.500V25.200H4Z"/><path fill="#f9fafb" d="M8.3 20.500H10.200V24.100H8.300Z"/><path fill="none" stroke="#1b474b" stroke-width="1.3" d="M3.5 35.400V28.900H14V35.400"/></svg><svg class="ic" style="left:508.2px;top:217px;width:36px;height:36px" viewBox="0 0 36 36" preserveAspectRatio="none"><rect x="0.2" y="0" width="17.8" height="7.6" rx="1.2" fill="#cfdadb"/><rect x="18" y="14.1" width="17.9" height="7.5" rx="1.2" fill="#cfdadb"/><path d="M9 7.2L27 14.6" stroke="#cfdadb" stroke-width="1.2"/><path fill="#cfdadb" d="M10 17.2L19.300 26.600H13.100V33.500H6.900V26.600H0.7Z"/><rect x="0.7" y="34.100" width="18.600" height="1.900" fill="#cfdadb"/></svg><svg class="ic" style="left:27.7px;top:283.9px;width:36.3px;height:36.3px" viewBox="0 0 36 36" preserveAspectRatio="none"><g fill="none" stroke="#1b474b" stroke-width="2.7" stroke-linejoin="round"><path d="M13.5 27.2H1.4V11.6L11.6 1.4H22.6V8.3"/><path d="M1.8 11.6H11.6V1.8"/><path d="M14.8 19.2L25 9H34.6V34.6H14.8Z"/><path d="M15.2 19.2H25V9.4"/></g></svg><svg class="ic" style="left:88.1px;top:284px;width:35.8px;height:35.8px" viewBox="0 0 36 36" preserveAspectRatio="none"><rect x="0" y="0" width="25.4" height="31" rx="2.2" fill="#cfdadb"/><rect x="5" y="2.6" width="15.6" height="2.7" rx="0.6" fill="#f9fafb"/><path fill="#f9fafb" stroke="#cfdadb" stroke-width="2.4" stroke-linejoin="round" d="M14.4 10.2H24.2L34.4 20.4V34.6H14.4Z"/><path fill="#cfdadb" d="M24.2 9.4L35.4 20.8H24.2Z"/><path fill="#f9fafb" d="M26 14.5L31 19.4H26Z"/></svg><svg class="ic" style="left:168.1px;top:283.4px;width:35.9px;height:35.9px" viewBox="0 0 64 63.5" preserveAspectRatio="none"><g fill="none" stroke="#1b474b"><path stroke-width="4.8" d="M15 6.2H49M15 57.4H49"/><path stroke-width="4.5" d="M6.3 15V48.6M57.6 15V48.6"/><g stroke-width="3.7"><path d="M10.7 10.7H2V7.8A5.8 5.800 0 0 1 7.800 2H10.7Z"/><path d="M53.3 10.7H62V7.8A5.8 5.800 0 0 0 56.200 2H53.3Z"/><path d="M10.7 52.9H2V55.800A5.8 5.800 0 0 0 7.800 61.600H10.7Z"/><path d="M53.3 52.9H62V55.800A5.8 5.800 0 0 1 56.200 61.600H53.3Z"/></g><rect x="17.6" y="17.2" width="19.4" height="19.2" rx="5" stroke-width="3.25"/><rect x="28.6" y="27" width="19.600" height="19.400" rx="5" stroke-width="3.25" fill="#f9fafb"/></g></svg><svg class="ic" style="left:248.1px;top:284px;width:36.3px;height:36.3px" viewBox="0 0 36 36" preserveAspectRatio="none"><path fill="#cfdadb" d="M33.2 0.6c2.2 1 3.2 3 2.2 5.2C32.5 11.5 27.6 19 24.6 22.4c-1 1.2-2.6 1.2-4.4-.2-1.8-1.3-2.2-2.8-1.4-4C21.8 13.6 27.2 5.8 30.2 1.6c.8-1 1.8-1.6 3-1z"/><path fill="#cfdadb" d="M16.6 21.2c3.2 1.2 4.8 4.4 3.4 8-1.6 4-6 6.6-10.8 6.6C4.4 35.800 1.200 32.400 0 26.600c1.4 1.2 3.4 2.400 4.800 2c2.200-.6 2.600-3 4.200-5.200 1.800-2.400 4.600-3.400 7.600-2.200z"/></svg><svg class="ic" style="left:330px;top:285.5px;width:28.4px;height:31.25px" viewBox="0 0 28.4 31.25" preserveAspectRatio="none"><path fill="none" stroke="#1b474b" stroke-width="2.3" d="M9.6 5.6V3.3a2 2 0 0 1 2-2h5.2a2 2 0 0 1 2 2v2.3"/><rect x="0" y="5.2" width="28.4" height="3.3" rx="0.8" fill="#1b474b"/><path fill="#1b474b" d="M2.2 8.4h24v19.4a3.4 3.4 0 0 1-3.4 3.4H5.6a3.4 3.4 0 0 1-3.4-3.4z"/><path fill="#f9fafb" d="M8.1 11h2.5v14.6H8.1zM13 11h2.5v14.6H13zM17.9 11h2.5v14.6h-2.5z"/></svg><span class="t" style="left:368.80px;top:291.00px;font-size:24px;line-height:30px;color:#1b474b;transform:scaleX(0.8998);transform-origin:0 0;">DELETE</span></div>
<div id="breadcrumbs" style="left:0px;top:1732px;width:3582px;height:62px;background:rgba(249,250,251,.93);border-top:2px solid #aabbc3;box-sizing:border-box;box-shadow:0 -2px 9px rgba(0,0,0,.16)"><div style="left:780px;top:66px;width:2020px;height:30px;box-shadow:0 0 46px 24px rgba(60,60,60,.15);border-radius:50%"></div>
<span class="t" style="left:28.08px;top:15.10px;font-size:26px;line-height:32px;color:#1b474b;font-weight:700;transform:scaleX(0.9192);transform-origin:0 0;">NiFi Flow</span><span class="t" style="left:3388.48px;top:12.60px;font-size:18.5px;line-height:23px;color:#4a4a4a;letter-spacing:1.757px;transform:scaleX(0.82);transform-origin:0 0;">POWERED BY</span><span class="t" style="left:3387.80px;top:30.70px;font-size:17.5px;line-height:22px;color:#444;letter-spacing:2.986px;font-weight:700;transform:scaleX(0.82);transform-origin:0 0;">APACHE NIFI</span><svg class="ic" style="left:3513px;top:12px;width:27.6px;height:38.3px;overflow:visible" viewBox="0 0 27.6 38.3" preserveAspectRatio="none"><path fill="#728e9b" d="M13.400 0C16.500 7.500 26.600 15.500 26.600 25C26.600 32.500 21 38 13.600 38C6 38 0.500 32.500 0.500 25C0.500 15.500 10.400 7.500 13.400 0Z"/><path fill="none" stroke="#fafbfc" stroke-width="0.700" d="M7 14.500C1.500 24 3 32 8.500 35.500"/><rect x="13.300" y="25" width="15" height="14" fill="#fafbfc"/><rect x="18.5" y="26.5" width="3" height="3" fill="#728e9b"/><rect x="23.5" y="26.5" width="3" height="3" fill="#728e9b"/><rect x="14.5" y="31.5" width="3" height="3" fill="#728e9b"/><rect x="19.5" y="31.5" width="3" height="3" fill="#728e9b"/><rect x="14.5" y="36.2" width="3" height="3" fill="#728e9b"/><rect x="24.5" y="22.5" width="3" height="3" fill="#728e9b"/><rect x="19.800" y="36.600" width="1.200" height="1.200" fill="#728e9b"/><rect x="24" y="31.500" width="1.200" height="1.200" fill="#728e9b"/></svg></div>
<div id="context-menu" class="menu" style="left:1686px;top:540px;width:434px;height:1192px;"><div class="mi" style="left:0px;top:6px;width:430px;height:48px;"><span class="t" style="left:48.30px;top:7.60px;font-size:26px;line-height:32px;color:#262626;letter-spacing:-0.172px;">Configure</span><svg class="ic" style="left:11.7px;top:12.6px;width:22.8px;height:22.8px" viewBox="0 0 100 100" preserveAspectRatio="none"><path fill="#1b474b" fill-rule="evenodd" stroke="#1b474b" stroke-width="3" stroke-linejoin="round" d="M40.11 14.35 L41.16 2.31 L58.84 2.31 L59.89 14.35 L68.22 17.8 L77.47 10.03 L89.97 22.53 L82.2 31.78 L85.65 40.11 L97.69 41.16 L97.69 58.84 L85.65 59.89 L82.2 68.22 L89.97 77.47 L77.47 89.97 L68.22 82.2 L59.89 85.65 L58.84 97.69 L41.16 97.69 L40.11 85.65 L31.78 82.2 L22.53 89.97 L10.03 77.47 L17.8 68.22 L14.35 59.89 L2.31 58.84 L2.31 41.16 L14.35 40.11 L17.8 31.78 L10.03 22.53 L22.53 10.03 L31.78 17.8ZM32 50a18 18 0 1 0 36 0a18 18 0 1 0 -36 0Z"/></svg></div>
<div class="mi" style="left:0px;top:54px;width:430px;height:48px;"><span class="t" style="left:47.30px;top:7.60px;font-size:26px;line-height:32px;color:#262626;letter-spacing:-0.076px;">Parameters</span></div>
<div class="mi" style="left:0px;top:102px;width:430px;height:48px;"><span class="t" style="left:49.30px;top:7.60px;font-size:26px;line-height:32px;color:#262626;letter-spacing:-0.095px;">Variables</span></div>
<div style="left:0px;top:156px;width:430px;height:2px;background:#c5d0d5"></div>
<div class="mi" style="left:0px;top:164px;width:430px;height:48px;"><span class="t" style="left:49.30px;top:7.60px;font-size:26px;line-height:32px;color:#262626;letter-spacing:0.073px;">Version</span><svg class="ic" style="left:397.6px;top:13.8px;width:9.8px;height:16.5px" viewBox="0 0 9.8 16.5" preserveAspectRatio="none"><polygon fill="#1b474b" points="0,0 9.8,8.25 0,16.5"/></svg></div>
<div style="left:0px;top:218px;width:430px;height:2px;background:#c5d0d5"></div>
<div class="mi" style="left:0px;top:226px;width:430px;height:48px;"><span class="t" style="left:47.30px;top:7.60px;font-size:26px;line-height:32px;color:#262626;letter-spacing:-0.171px;">Enter group</span><svg class="ic" style="left:12px;top:14.5px;width:22.5px;height:19px" viewBox="0 0 22.5 19" preserveAspectRatio="none"><path fill="#1b474b" d="M0 6.400H8.400V1L17.400 9.500L8.400 18V12.600H0Z"/><path fill="none" stroke="#1b474b" stroke-width="2" d="M13.600 1.200H18.400A3 3 0 0 1 21.400 4.200V14.800A3 3 0 0 1 18.400 17.800H13.600"/></svg></div>
<div style="left:0px;top:280px;width:430px;height:2px;background:#c5d0d5"></div>
<div class="mi" style="left:0px;top:288px;width:430px;height:48px;"><span class="t" style="left:48.30px;top:7.60px;font-size:26px;line-height:32px;color:#262626;letter-spacing:-0.121px;">Start</span><svg class="ic" style="left:12px;top:13.5px;width:20.2px;height:22.5px;" viewBox="0 0 100 100" preserveAspectRatio="none"><polygon fill="#1b474b" stroke="#1b474b" stroke-width="3" stroke-linejoin="round" points="2,3 97,50 2,97"/></svg></div>
<div class="mi" style="left:0px;top:336px;width:430px;height:48px;"><span class="t" style="left:48.33px;top:7.60px;font-size:26px;line-height:32px;color:#262626;transform:scaleX(0.9745);transform-origin:0 0;">Stop</span><svg class="ic" style="left:12px;top:13.5px;width:22.2px;height:22.2px" viewBox="0 0 22.2 22.2" preserveAspectRatio="none"><rect width="22.2" height="22.2" rx="1.5" fill="#1b474b"/></svg></div>
<div class="mi" style="left:0px;top:384px;width:430px;height:48px;"><span class="t" style="left:47.35px;top:7.60px;font-size:26px;line-height:32px;color:#262626;transform:scaleX(0.9771);transform-origin:0 0;">Enable</span><svg class="ic" style="left:12px;top:13.6px;width:13.1px;height:24px" viewBox="0 0 13.1 24" preserveAspectRatio="none"><polygon fill="#1b474b" points="3.75,0.4 9.2,0 6.9,7.6 13.1,6.6 4,24 6.5,13.4 0,15.4"/></svg></div>
<div class="mi" style="left:0px;top:432px;width:430px;height:48px;"><span class="t" style="left:47.30px;top:7.60px;font-size:26px;line-height:32px;color:#262626;letter-spacing:-0.008px;">Disable</span><svg class="ic" style="left:15.5px;top:9.5px;width:23px;height:26px" viewBox="0 0 23 26" preserveAspectRatio="none"><polygon fill="#1b474b" points="9.18,0.43 14.95,0 12.51,8.21 19.09,7.13 9.44,25.92 12.09,14.47 5.2,16.63"/><path d="M1.2 3.6L22 23" stroke="#f9fafb" stroke-width="3.7" fill="none"/><path d="M0.5 2.6L22.6 23.6" stroke="#1b474b" stroke-width="1.7" fill="none"/></svg></div>
<div style="left:0px;top:486px;width:430px;height:2px;background:#c5d0d5"></div>
<div class="mi" style="left:0px;top:494px;width:430px;height:48px;"><span class="t" style="left:47.30px;top:7.60px;font-size:26px;line-height:32px;color:#262626;letter-spacing:-0.060px;">Enable all controller services</span><svg class="ic" style="left:12px;top:13.6px;width:13.1px;height:24px" viewBox="0 0 13.1 24" preserveAspectRatio="none"><polygon fill="#1b474b" points="3.75,0.4 9.2,0 6.9,7.6 13.1,6.6 4,24 6.5,13.4 0,15.4"/></svg></div>
<div class="mi" style="left:0px;top:542px;width:430px;height:48px;"><span class="t" style="left:47.30px;top:7.60px;font-size:26px;line-height:32px;color:#262626;letter-spacing:0.034px;">Disable all controller services</span><svg class="ic" style="left:15.5px;top:9.5px;width:23px;height:26px" viewBox="0 0 23 26" preserveAspectRatio="none"><polygon fill="#1b474b" points="9.18,0.43 14.95,0 12.51,8.21 19.09,7.13 9.44,25.92 12.09,14.47 5.2,16.63"/><path d="M1.2 3.6L22 23" stroke="#f9fafb" stroke-width="3.7" fill="none"/><path d="M0.5 2.6L22.6 23.6" stroke="#1b474b" stroke-width="1.7" fill="none"/></svg></div>
<div style="left:0px;top:596px;width:430px;height:2px;background:#c5d0d5"></div>
<div class="mi" style="left:0px;top:604px;width:430px;height:48px;"><span class="t" style="left:49.30px;top:7.60px;font-size:26px;line-height:32px;color:#262626;letter-spacing:0.107px;">View status history</span><svg class="ic" style="left:12px;top:13.4px;width:30px;height:22.1px" viewBox="0 0 30 22.1" preserveAspectRatio="none"><path fill="#1b474b" d="M0 0H2V20H30V22.100H0Z"/><polygon fill="#1b474b" points="4,18.2 4,10.400 10.400,2.500 17.500,9.400 24,6.200 28.100,18.200"/></svg></div>
<div class="mi" style="left:0px;top:652px;width:430px;height:48px;"><span class="t" style="left:49.30px;top:7.60px;font-size:26px;line-height:32px;color:#262626;letter-spacing:0.022px;">View connections</span><svg class="ic" style="left:13.9px;top:9.7px;width:26.1px;height:26.1px" viewBox="0 0 26 26" preserveAspectRatio="none"><circle cx="13" cy="13" r="13" fill="#1b474b"/><path d="M2.600 4.500L11.800 11.800" stroke="#f9fafb" stroke-width="2.300"/><polygon fill="#f9fafb" points="17,17.300 8,15.600 15.500,8.100"/></svg><svg class="ic" style="left:397.6px;top:13.8px;width:9.8px;height:16.5px" viewBox="0 0 9.8 16.5" preserveAspectRatio="none"><polygon fill="#1b474b" points="0,0 9.8,8.25 0,16.5"/></svg></div>
<div style="left:0px;top:706px;width:430px;height:2px;background:#c5d0d5"></div>
<div class="mi" style="left:0px;top:714px;width:430px;height:48px;"><span class="t" style="left:47.30px;top:7.60px;font-size:26px;line-height:32px;color:#262626;letter-spacing:0.079px;">Manage access policies</span><svg class="ic" style="left:12px;top:13.7px;width:24px;height:23px" viewBox="0 0 34 32" preserveAspectRatio="none"><g fill="none" stroke="#1b474b"><circle cx="10.4" cy="10.2" r="7.6" stroke-width="5.4"/><path d="M15.5 15.3L30.8 29.6" stroke-width="4.6" stroke-linecap="round"/><path d="M22.6 21.8L27.2 16.8M28.4 27.2L33 22.2" stroke-width="3.5"/></g></svg></div>
<div style="left:0px;top:768px;width:430px;height:2px;background:#c5d0d5"></div>
<div class="mi" style="left:0px;top:776px;width:430px;height:48px;"><span class="t" style="left:48.33px;top:7.60px;font-size:26px;line-height:32px;color:#262626;transform:scaleX(0.974);transform-origin:0 0;">Center in view</span><svg class="ic" style="left:12px;top:13.5px;width:22.2px;height:22.2px" viewBox="0 0 22.2 22.2" preserveAspectRatio="none"><circle cx="11.100" cy="11.100" r="7.200" fill="none" stroke="#1b474b" stroke-width="2.700"/><path stroke="#1b474b" stroke-width="2.800" stroke-linecap="round" d="M11.100 1.300V6M11.100 16.200V20.900M1.300 11.100H6M16.200 11.100H20.900"/></svg></div>
<div style="left:0px;top:830px;width:430px;height:2px;background:#c5d0d5"></div>
<div class="mi" style="left:0px;top:838px;width:430px;height:48px;"><span class="t" style="left:48.34px;top:7.60px;font-size:26px;line-height:32px;color:#262626;transform:scaleX(0.9633);transform-origin:0 0;">Group</span><svg class="ic" style="left:13.9px;top:9.7px;width:26px;height:26px" viewBox="0 0 64 63.5" preserveAspectRatio="none"><g fill="none" stroke="#1b474b"><path stroke-width="4.8" d="M15 6.2H49M15 57.4H49"/><path stroke-width="4.5" d="M6.3 15V48.6M57.6 15V48.6"/><g stroke-width="3.7"><path d="M10.7 10.7H2V7.8A5.8 5.800 0 0 1 7.800 2H10.7Z"/><path d="M53.3 10.7H62V7.8A5.8 5.800 0 0 0 56.200 2H53.3Z"/><path d="M10.7 52.9H2V55.800A5.8 5.800 0 0 0 7.800 61.600H10.7Z"/><path d="M53.3 52.9H62V55.800A5.8 5.800 0 0 1 56.200 61.600H53.3Z"/></g><rect x="17.6" y="17.2" width="19.4" height="19.2" rx="5" stroke-width="3.9"/><rect x="28.6" y="27" width="19.600" height="19.400" rx="5" stroke-width="3.9" fill="#f9fafb"/></g></svg></div>
<div style="left:0px;top:892px;width:430px;height:2px;background:#c5d0d5"></div>
<div class="mi" style="left:0px;top:900px;width:430px;height:48px;"><span class="t" style="left:47.30px;top:7.60px;font-size:26px;line-height:32px;color:#262626;letter-spacing:0.273px;">Download flow definition</span><svg class="ic" style="left:397.6px;top:13.8px;width:9.8px;height:16.5px" viewBox="0 0 9.8 16.5" preserveAspectRatio="none"><polygon fill="#1b474b" points="0,0 9.8,8.25 0,16.5"/></svg></div>
<div style="left:0px;top:954px;width:430px;height:2px;background:#c5d0d5"></div>
<div class="mi" style="left:0px;top:962px;width:430px;height:48px;"><span class="t" style="left:48.30px;top:7.60px;font-size:26px;line-height:32px;color:#262626;letter-spacing:-0.059px;">Create template</span><svg class="ic" style="left:14px;top:9.5px;width:26.2px;height:26.2px" viewBox="0 0 36 36" preserveAspectRatio="none"><rect x="0.2" y="0" width="18.2" height="7.6" rx="1.2" fill="#1b474b"/><rect x="18" y="14.1" width="17.9" height="7.5" rx="1.2" fill="#1b474b"/><path d="M9 7.2L27 14.6" stroke="#1b474b" stroke-width="1.2"/><path fill="none" stroke="#1b474b" stroke-width="1.3" d="M0.7 19.600H13.2L16.700 23.100V35.400H0.7Z"/><path fill="#1b474b" d="M4 19.400H11.500V25.200H4Z"/><path fill="#f9fafb" d="M8.3 20.500H10.200V24.100H8.300Z"/><path fill="none" stroke="#1b474b" stroke-width="1.3" d="M3.5 35.400V28.900H14V35.400"/></svg></div>
<div style="left:0px;top:1016px;width:430px;height:2px;background:#c5d0d5"></div>
<div class="mi" style="left:0px;top:1024px;width:430px;height:48px;"><span class="t" style="left:48.35px;top:7.60px;font-size:26px;line-height:32px;color:#262626;transform:scaleX(0.9498);transform-origin:0 0;">Copy</span><svg class="ic" style="left:12px;top:12px;width:26px;height:26px" viewBox="0 0 36 36" preserveAspectRatio="none"><g fill="none" stroke="#1b474b" stroke-width="2.7" stroke-linejoin="round"><path d="M13.5 27.2H1.4V11.6L11.6 1.4H22.6V8.3"/><path d="M1.8 11.6H11.6V1.8"/><path d="M14.8 19.2L25 9H34.6V34.6H14.8Z"/><path d="M15.2 19.2H25V9.4"/></g></svg></div>
<div style="left:0px;top:1078px;width:430px;height:2px;background:#c5d0d5"></div>
<div class="mi" style="left:0px;top:1086px;width:430px;height:48px;"><span class="t" style="left:47.30px;top:7.60px;font-size:26px;line-height:32px;color:#262626;letter-spacing:-0.183px;">Empty all queues</span><svg class="ic" style="left:12px;top:13.5px;width:22.2px;height:22.2px" viewBox="0 0 22.2 22.2" preserveAspectRatio="none"><circle cx="11.100" cy="11.100" r="11.100" fill="#1b474b"/><rect x="4.700" y="9.100" width="12.800" height="4" rx="1" fill="#f9fafb"/></svg></div>
<div class="mi" style="left:0px;top:1134px;width:430px;height:48px;"><span class="t" style="left:47.30px;top:7.60px;font-size:26px;line-height:32px;color:#262626;letter-spacing:-0.199px;">Delete</span><svg class="ic" style="left:12px;top:13.4px;width:20.2px;height:22.5px" viewBox="0 0 28.4 31.25" preserveAspectRatio="none"><path fill="none" stroke="#1b474b" stroke-width="2.3" d="M9.6 5.6V3.3a2 2 0 0 1 2-2h5.2a2 2 0 0 1 2 2v2.3"/><rect x="0" y="5.2" width="28.4" height="3.3" rx="0.8" fill="#1b474b"/><path fill="#1b474b" d="M2.2 8.4h24v19.4a3.4 3.4 0 0 1-3.4 3.4H5.6a3.4 3.4 0 0 1-3.4-3.4z"/><path fill="#f9fafb" d="M8.1 11h2.5v14.6H8.1zM13 11h2.5v14.6H13zM17.9 11h2.5v14.6h-2.5z"/></svg></div>
</div>
<div id="context-submenu" class="menu" style="left:2108px;top:704px;width:434px;height:64px;background:#fdfdfe"><div class="mi" style="left:0px;top:6px;width:430px;height:48px;background:#cbd2d9;box-shadow:0 2px 3px rgba(0,0,0,.12)"><svg class="ic" style="left:11.9px;top:12.7px;width:24.4px;height:23.2px" viewBox="0 0 24.4 23.2" preserveAspectRatio="none"><path fill="#1b474b" d="M1.800 15.600H22.200A1.800 1.800 0 0 1 24 17.400V21.400A1.800 1.800 0 0 1 22.200 23.200H1.800A1.800 1.800 0 0 1 0 21.400V17.400A1.800 1.800 0 0 1 1.800 15.600Z"/><path fill="#1b474b" stroke="#cbd2d9" stroke-width="1.800" stroke-linejoin="round" d="M12 0.200L19.400 7.900H15.100V15.400A1 1 0 0 1 14.100 16.400H9.900A1 1 0 0 1 8.900 15.400V7.900H4.600Z"/><path fill="#1b474b" d="M12 0.200L19.400 7.900H15.100V15.400H8.900V7.900H4.600Z"/><rect x="17" y="19" width="1.700" height="1.900" fill="#cbd2d9"/><rect x="19.800" y="19" width="1.700" height="1.900" fill="#cbd2d9"/></svg><span class="t" style="left:47.80px;top:7.70px;font-size:26px;line-height:32px;color:#262626;letter-spacing:0.163px;">Start version control</span></div>
</div>
<div style="left:0px;top:1772px;width:26px;height:22px;background:radial-gradient(circle at 23.8px 1.25px, transparent 25px, #15101f 26px)"></div>
<div style="left:3556px;top:1772px;width:26px;height:22px;background:radial-gradient(circle at 0.5px 1.25px, transparent 25px, #15101f 26px)"></div>
</div>
</body></html>
